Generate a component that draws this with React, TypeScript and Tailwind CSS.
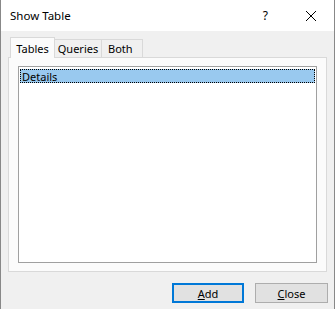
import React from "react";

export default function App() {
  const font = { fontFamily: '"Noto Sans", "Open Sans", Arial, sans-serif' };
  return (
    <div
      className="w-[335px] h-[309px] bg-[#f0f0f0] border-l border-r border-[#888888] flex flex-col text-black"
      style={font}
    >
      <div className="h-[31px] bg-white flex items-center shrink-0">
        <span className="ml-[9px] text-[11.5px] leading-none">Show Table</span>
        <span className="ml-auto mr-[37px] text-[12px] leading-none">?</span>
        <svg width="12" height="12" viewBox="0 0 12 12" className="mr-[17px]">
          <path d="M1 1 L11 11 M11 1 L1 11" stroke="#000" strokeWidth="1" />
        </svg>
      </div>
      <div className="px-[7px] pt-[6px] flex flex-col">
        <div className="flex items-end h-[20px] pl-[2px] relative z-10">
          <div className="w-[45px] h-[21px] -mb-[1px] bg-[#fbfbfb] border border-b-0 border-[#d9d9d9] text-[11px] flex items-center justify-center leading-none">
            Tables
          </div>
          <div className="w-[47px] h-[18px] bg-[#f0f0f0] border border-l-0 border-b-0 border-[#d9d9d9] text-[11px] flex items-center justify-center leading-none">
            Queries
          </div>
          <div className="w-[41px] h-[18px] pl-[6px] bg-[#f0f0f0] border border-l-0 border-b-0 border-[#d9d9d9] text-[11px] flex items-center leading-none">
            Both
          </div>
        </div>
        <div className="h-[215px] bg-[#fbfbfb] border border-[#d9d9d9] pt-[8px] px-[9px] pb-[8px]">
          <div className="h-full bg-white border border-[#a0a0a0] p-[1px] pt-[2px]">
            <div className="h-[14px] bg-[#99c9ef] border border-dotted border-black flex items-center text-[11px] leading-none pl-[1px]">
              Details
            </div>
          </div>
        </div>
      </div>
      <div className="flex justify-end gap-[11px] pr-[6px] mt-[11px]">
        <button className="w-[72px] h-[20px] bg-[#e1e1e1] border-2 border-[#0078d7] text-[11px] leading-none flex items-center justify-center">
          <span><span className="underline">A</span>dd</span>
        </button>
        <button className="w-[73px] h-[20px] bg-[#e1e1e1] border border-[#adadad] text-[11px] leading-none flex items-center justify-center">
          <span><span className="underline">C</span>lose</span>
        </button>
      </div>
    </div>
  );
}
